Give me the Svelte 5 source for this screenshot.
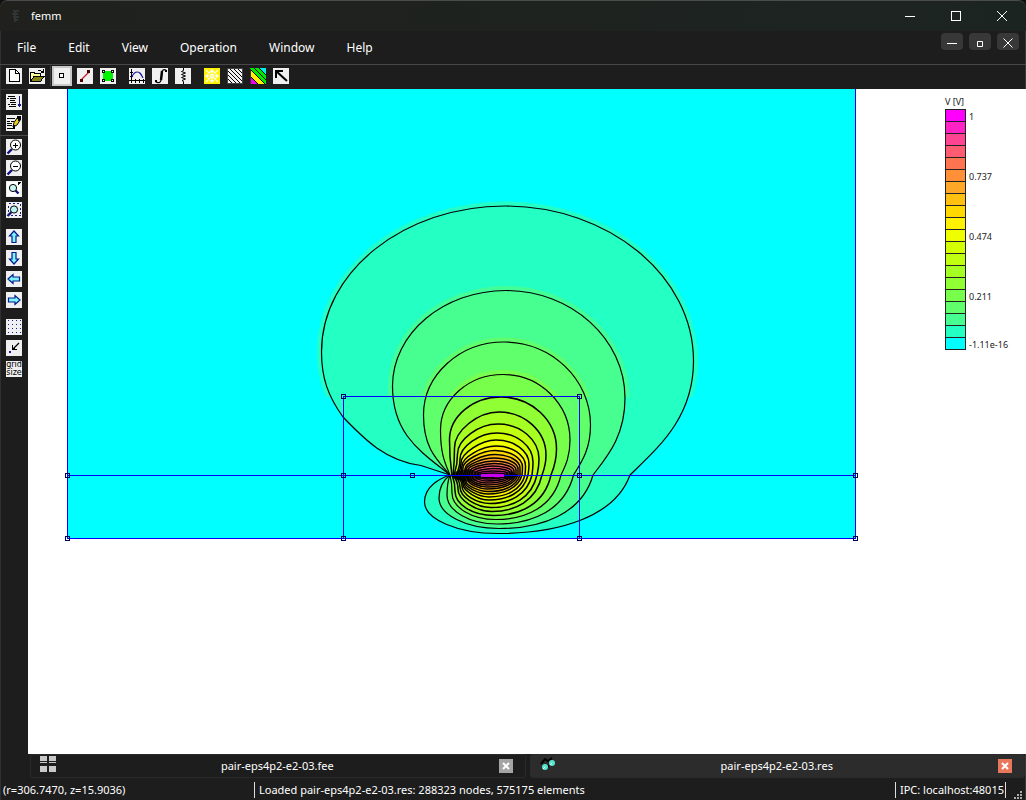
<script>
  const K = '#000';
  const doc = '<rect width="16" height="16" fill="#f0f0f0"/>';
  const p = (d, stroke = K, w = 1, fill = 'none') =>
    `<path d="${d}" stroke="${stroke}" stroke-width="${w}" fill="${fill}"/>`;
  const r = (x, y, w, h, fill = K) => `<rect x="${x}" y="${y}" width="${w}" height="${h}" fill="${fill}"/>`;
  const smooth = (s) => `<g shape-rendering="auto">${s}</g>`;

  const arrow = (angle) =>
    doc + `<g transform="rotate(${angle} 8 8)" shape-rendering="auto">` +
    p('M8 2L12.5 7H10V13.5H6V7H3.5Z', '#001a8c', 1.2, '#7df4ff') + '</g>';
  const lens = (cx, cy, rad, fill, handle) =>
    smooth(p(handle, '#10107c', 2.4) + `<circle cx="${cx}" cy="${cy}" r="${rad}" fill="${fill}" stroke="#000"/>`);
  const handles = [[2, 2], [11, 2], [2, 11], [11, 11]]
    .map(([x, y]) => r(x, y, 3, 3) + r(x + 1, y + 1, 1, 1, '#fff')).join('');
  const gridDots = [2, 6, 10, 14]
    .flatMap((y) => [2, 6, 10, 14].map((x) => r(x, y - 1, 1, 1, '#1a1a9c'))).join('');

  const icons = {
    new: doc + p('M3.5 1.5H9.5L13.5 5.5V13.5H3.5Z', K, 1, '#fff') + p('M9.5 1.5V5.5H13.5'),
    open: doc + p('M1.5 13.5V4.5H5L6 5.5H11.5V8', K, 1, '#ffff9a') +
      p('M1.5 13.5L5 8.5H15L11.5 13.5Z', K, 1, '#85851a') + p('M9 2.5H10M10.5 2L13.5 4M14.5 1V4.5H11.5'),
    point: doc + p('M5.5 5.5H9.5V9.5H5.5Z', K, 1, '#fff'),
    segment: doc + smooth(p('M4 12L12 4', '#c02030', 1.2)) + r(3, 11, 3, 3, '#4d0000') + r(10, 2, 3, 3, '#4d0000'),
    area: doc + p('M5 3H11L13 5V11L11 13H5L3 11V5Z', 'none', 0, '#00f400') + handles,
    plot: doc + p('M2.5 1V15M0 12.5H16M6.5 11V15M10.5 11V15M14.5 11V15M1 4.5H4M1 8.5H4') +
      smooth(p('M3 9C4 6 6 4 8.5 4S12 6 14 10', '#1818a8', 1.2)),
    integral: doc + smooth(p('M14 2.2C11.5 1 10 2 10 5L9 12C8.7 15 6 15.5 3.5 13.5', K, 1.3) + p('M10 3L9 12', K, 2.4)) + r(13, 2, 2, 2) + r(3, 12, 2, 2),
    coil: doc + smooth(p('M8.5 0V2.5L6.5 3.5L10.5 5L6.5 6.5L10.5 8L6.5 9.5L10.5 11L7 12.5L8.5 13.5V16', K, 1)),
    mesh: r(0, 0, 16, 16, '#fff400') + smooth(p('M8 1V15M1 8H15M2 2L7 7M14 2L9 7M2 14L7 9M14 14L9 9M8 2L14 8L8 14L2 8Z', '#fffde8', 1.2)),
    contour: doc + smooth(p('M1 11L5 15M1 7L9 15M1 3L13 15M2 0L15 13M6 0L15 9M10 0L15 5', K, 1)) + p('M.5 .5H15.5V15.5H.5Z', '#444'),
    density: r(0, 0, 16, 16, '#00e800') +
      smooth(p('M0 8L8 16H0Z', 'none', 0, '#f000f0') + p('M0 1L15 16H8L0 8Z', 'none', 0, '#fff200') + p('M9 0H16V7Z', 'none', 0, '#00f0f0') + p('M0 1L15 16M0 8L8 16M4 0L16 12M9 0L16 7', K, 1)) + p('M.5 .5V15.5', '#333'),
    vector: doc + r(2, 2, 8, 2) + r(2, 2, 2, 8) + smooth(p('M3 3L14 13', K, 2)),
    output: doc + r(2, 2, 7, 1) + r(1, 4, 2, 1) + r(4, 4, 6, 1) + r(4, 6, 5, 1) + r(4, 8, 6, 1) + r(2, 10, 2, 1) + r(5, 10, 5, 1) + r(3, 12, 7, 1) +
      r(13, 2, 1, 11, '#1a1a8c') + r(12, 11, 3, 1, '#1a1a8c') + r(12, 10, 3, 1, '#1a1a8c'),
    edit: doc + r(1, 3, 8, 1) + r(1, 6, 3, 1) + r(5, 6, 3, 1) + r(1, 8, 5, 1) + r(1, 10, 5, 1) + r(1, 13, 8, 1) +
      smooth(p('M7 12L8 7.5L11.5 2.5L14.5 4.5L11 10Z', K, 1, '#e8cf20')) + p('M11 2L14 1L15 4L13 6Z', K, 1, K) + r(7, 10, 2, 3),
    zoomIn: doc + lens(9.5, 6, 5, '#fff', 'M6 10L1.5 14.5') + p('M7 6.5H12M9.5 4V9'),
    zoomOut: doc + lens(9.5, 6, 5, '#fff', 'M6 10L1.5 14.5') + p('M7 6.5H12'),
    zoomPage: doc + r(1, 1, 13, 14, '#fff') + p('M12.5 4V1.5H15') + p('M12 4L15 1') + lens(7, 7, 3.6, '#c8f5f2', 'M9.5 9.5L12.5 12.5'),
    zoomWindow: doc + `<path d="M2.5 1.5H14.5V13.5H2.5Z" fill="none" stroke="#1a1a8c" stroke-dasharray="2 2"/>` + lens(8, 7.5, 3.6, '#b8f5f0', 'M5.5 10L1.5 14'),
    up: arrow(0), down: arrow(180), left: arrow(270), right: arrow(90),
    grid: doc + gridDots,
    snap: doc + smooth(p('M13 3L7 9', K, 1.3)) + p('M6.5 5V9.5H11') + r(7, 8, 2, 1) + r(3, 11, 2, 2, '#1a1a9c'),
    gridSize: doc +
      '<text x="8" y="6" text-anchor="middle" class="tiny">grid</text><text x="8" y="14" text-anchor="middle" class="tiny">size</text>'
  };

  const menus = ['File', 'Edit', 'View', 'Operation', 'Window', 'Help'];
  const toolGroups = [['new', 'open'], ['point', 'segment', 'area'], ['plot', 'integral', 'coil'], ['mesh', 'contour', 'density', 'vector']];
  const sideGroups = [['output', 'edit'], ['zoomIn', 'zoomOut', 'zoomPage', 'zoomWindow'], ['up', 'down', 'left', 'right'], ['grid', 'snap', 'gridSize']];

  // Colour scale, from the highest potential to the lowest.
  const scale = [
    '#ff00ff', '#ff22c4', '#ff4494', '#ff5c74', '#ff7450', '#ff9038', '#ffa828', '#ffc012', '#ffd800', '#fff200',
    '#f0ff00', '#d4ff00', '#c0ff10', '#a6ff22', '#90ff34', '#78ff4c', '#60ff6c', '#46ff90', '#24ffc4', '#00ffff'
  ];
  const scaleText = { 0: '1', 5: '0.737', 10: '0.474', 15: '0.211', 19: '-1.11e-16' };

  const axis = 475;
  // Equipotentials: anchor x, left x/y, top x/y, right x/y, axis crossing x, bottom y, lower-left x/y.
  const levels = [
    [450, 321.5, 352, 505, 206, 693.5, 361, 630, 533.5, 424.5, 502],
    [450, 392.5, 386, 506, 290.5, 625, 398, 593, 528.5, 439, 498],
    [450, 423.5, 415, 504, 342, 590.5, 425, 573.5, 524, 447, 495],
    [450, 440.5, 430, 503, 374.5, 570, 440, 561, 519.5, 452, 493],
    [452, 449.5, 440, 501, 397, 556.5, 449, 551, 515.5, 455, 491],
    [453, 454.5, 448, 499, 412, 546, 455, 542, 511.5, 458, 489],
    [454, 457.5, 454, 498, 424, 539, 459, 537, 507.5, 460, 487],
    [456, 460, 459, 497, 433, 533, 462, 532, 503.5, 462, 486],
    [457, 461, 463, 496, 440, 529, 464, 528, 500, 463, 484],
    [459, 462, 466, 496, 446, 525.5, 466, 525, 497, 464, 483],
    [461, 463, 468, 495, 450.5, 522.5, 467, 522, 494, 465, 482],
    [463, 465, 469, 495, 454.5, 520, 468, 520, 491.5, 466, 481],
    [465, 466, 470, 494, 458, 518, 469, 518, 489, 468, 480],
    [467, 468, 470, 494, 461, 516, 470, 516, 487, 469, 479],
    [469, 470, 471, 494, 463.5, 514, 471, 514, 485, 471, 479],
    [472, 472, 472, 493, 466, 512, 472, 512, 483, 473, 478],
    [475, 475, 473, 493, 468.5, 510, 473, 510, 481, 476, 477],
    [478, 478, 473, 493, 471, 507, 473, 507, 479, 479, 477],
    [480, 481, 474, 493, 473, 504, 474, 504, 477.5, 481, 476]
  ];

  function outline([a, lx, ly, tx, ty, rx, ry, cx, by, bx, bly], i) {
    const k = 0.55;
    const kl = i < 5 ? 0.55 : i < 8 ? 0.48 : 0.42;
    const bm = tx - 7;
    const first = i === 0
      ? `L421 465.5C386 461 365 440 343 417C328 396 ${lx} 378 ${lx} ${ly}`
      : `C${a - 0.5 * (a - lx)} ${axis - 0.26 * (axis - ly)} ${lx} ${ly + 0.55 * (axis - ly)} ${lx} ${ly}`;
    return `M${a} ${axis}` + first +
      `C${lx} ${ly - kl * (ly - ty)} ${tx - kl * (tx - lx)} ${ty} ${tx} ${ty}` +
      `C${tx + k * (rx - tx)} ${ty} ${rx} ${ry - k * (ry - ty)} ${rx} ${ry}` +
      `C${rx} ${ry + 0.5 * (axis - ry)} ${cx + 0.44 * (rx - cx)} ${axis - 0.24 * (axis - ry)} ${cx} ${axis}` +
      `C${cx - 0.115 * (cx - bm)} ${axis + 0.72 * (by - axis)} ${bm + 0.46 * (cx - bm)} ${by} ${bm} ${by}` +
      `C${bm - kl * (bm - bx)} ${by} ${bx} ${bly + kl * (by - bly)} ${bx} ${bly}` +
      `C${bx} ${bly - 0.6 * (bly - axis)} ${a - 0.35 * (a - bx)} ${axis + 3} ${a} ${axis}Z`;
  }
  const curves = levels.map((l, i) => ({ d: outline(l, i), fill: scale[18 - i], halo: scale[Math.max(17 - i, 0)], i }));
  const nodes = [[343, 396], [579, 396], [67, 475], [343, 475], [412, 475], [579, 475], [855, 475], [67, 538], [343, 538], [579, 538], [855, 538]];
  // Geometry segments, one unit thick: x, y, width, height.
  const edges = [[67, 88, 1, 451], [855, 88, 1, 451], [67, 538, 789, 1], [67, 475, 789, 1], [343, 396, 237, 1], [343, 396, 1, 143], [579, 396, 1, 143]];
</script>

{#snippet tool(name)}
  <button class="tool" class:active={name === 'point'} aria-label={name}>
    <svg class="icon" viewBox="0 0 16 16" shape-rendering="crispEdges">{@html icons[name]}</svg>
  </button>
{/snippet}

<div class="window">
  <header class="title">
    <svg class="logo" viewBox="0 0 16 16"><path d="M5 3h6M4 6h6M5 9h6M6 12h4M7 2v12" stroke="#303432" stroke-width="2" fill="none" /></svg>
    <span>femm</span>
    <div class="system">
      <button aria-label="Minimize"><svg viewBox="0 0 12 12"><path d="M1 6.5h10" /></svg></button>
      <button aria-label="Maximize"><svg viewBox="0 0 12 12"><rect x="1.5" y="1.5" width="9" height="9" /></svg></button>
      <button aria-label="Close"><svg viewBox="0 0 12 12"><path d="M1 1l10 10M11 1L1 11" /></svg></button>
    </div>
  </header>

  <nav class="menu">
    {#each menus as m}<button>{m}</button>{/each}
    <div class="child">
      <button aria-label="Minimize document"><svg viewBox="0 0 12 12"><path d="M1 7.5h10" /></svg></button>
      <button aria-label="Restore document"><svg viewBox="0 0 12 12"><path d="M3.5 5.5h5v5h-5z" /></svg></button>
      <button aria-label="Close document"><svg viewBox="0 0 12 12"><path d="M1.5 2.5l9 9M10.5 2.5l-9 9" /></svg></button>
    </div>
  </nav>

  <div class="toolbar">
    {#each toolGroups as g}
      <div class="group">{#each g as n}{@render tool(n)}{/each}</div>
    {/each}
  </div>

  <main>
    <aside>
      {#each sideGroups as g}
        <div class="group">{#each g as n}{@render tool(n)}{/each}</div>
      {/each}
    </aside>

    <section class="canvas">
      <svg class="field" viewBox="28 89 998 665" preserveAspectRatio="xMinYMin meet">
        <defs>
          <clipPath id="coarse"><rect x="67" y="89" width="788" height="308" /></clipPath>
        </defs>
        <rect x="67" y="88" width="788" height="450" fill="#00ffff" />
        {#each curves as c}
          {#if c.i < 4}
            <path d={c.d} fill="none" stroke={c.halo} stroke-width="9" opacity="0.5" clip-path="url(#coarse)" />
          {/if}
          <path d={c.d} fill={c.fill} stroke="#000" stroke-width={c.i < 4 ? 1.2 : 1.5} />
        {/each}
        <path d="M450 475.5L457 471L470 469L482 473V478L470 482L457 480ZM503 473L511 471L519 475.5L511 480L503 478Z" fill="#000" opacity="0.75" />
        {#each edges as [x, y, w, h]}
          <rect {x} {y} width={w} height={h} fill="#0000ff" />
        {/each}
        <path d="M481 475.5H504" stroke="#c800f0" stroke-width="3" />
        {#each nodes as [x, y]}
          <rect x={x - 1.5} y={y - 1.5} width="4" height="4" fill="none" stroke="#000058" />
        {/each}
      </svg>

      <div class="legend">
        <div class="unit">V [V]</div>
        {#each scale as c, i}
          <div class="step"><i style:background={c}></i><span>{scaleText[i] ?? ''}</span></div>
        {/each}
      </div>
    </section>
  </main>

  <div class="tabs">
    <div class="tab">
      <svg class="icon" viewBox="0 0 16 16" shape-rendering="crispEdges"><path d="M0 0h7v5H0zM9 0h7v5H9zM0 6h7v1H0zM9 6h7v1H9zM0 10h7v6H0zM9 10h7v6H9z" fill="#c8c8c8" /></svg>
      <button class="name">pair-eps4p2-e2-03.fee</button>
      <button class="close" aria-label="Close tab"><svg viewBox="0 0 14 14"><path d="M4 4l6 6M10 4l-6 6" /></svg></button>
    </div>
    <div class="tab current">
      <svg class="icon" viewBox="0 0 16 16"><path d="M1 8L5 3L8 5L12 2M6 13L9 9" stroke="#000" stroke-width="2" fill="none" /><circle cx="5" cy="11" r="3" fill="#58e6cf" /><circle cx="12" cy="7" r="3" fill="#58e6cf" /><path d="M3 13l2-2M10 9l2-2" stroke="#dffff8" /></svg>
      <button class="name">pair-eps4p2-e2-03.res</button>
      <button class="close" aria-label="Close tab"><svg viewBox="0 0 14 14"><path d="M4 4l6 6M10 4l-6 6" /></svg></button>
    </div>
  </div>

  <footer>
    <span class="coords">(r=306.7470, z=15.9036)</span>
    <span class="message">Loaded pair-eps4p2-e2-03.res: 288323 nodes, 575175 elements</span>
    <span class="ipc">IPC: localhost:48015</span>
    <svg class="grip" viewBox="0 0 10 10" shape-rendering="crispEdges"><path d="M7 1h2v2H7zM4 4h2v2H4zM7 4h2v2H7zM1 7h2v2H1zM4 7h2v2H4zM7 7h2v2H7z" fill="#aaa" /></svg>
  </footer>
</div>

<style>
  :global(body) { margin: 0; background: #101010; }
  .window {
    box-sizing: border-box;
    display: flex;
    flex-direction: column;
    min-height: 100vh;
    background: #1d1d1d;
    border-top: 1px solid #4a4c4a;
    border-radius: 8px 8px 0 0;
    box-shadow: inset 1px 0 #303030, inset -1px 0 #383838;
    color: #fff;
    font: 11px/16px "Noto Sans", "Open Sans", sans-serif;
    overflow: hidden;
  }
  button {
    padding: 0;
    border: 0;
    background: none;
    color: inherit;
    font: inherit;
  }
  svg { display: block; }
  .icon { width: 16px; height: 16px; flex: none; }
  .icon :global(.tiny) { font: 8px "DejaVu Sans", sans-serif; fill: #000; }

  .title {
    display: flex;
    align-items: center;
    height: 30px;
    padding: 0 1px 0 8px;
    background: linear-gradient(90deg, #20211d, #1c2422);
  }
  .logo { width: 16px; height: 16px; margin-right: 7px; }
  .system { display: flex; margin-left: auto; }
  .system button { display: grid; place-items: center; width: 46px; height: 30px; }
  .system svg, .child svg { width: 12px; height: 12px; fill: none; stroke: #fff; }

  .menu {
    display: flex;
    align-items: center;
    gap: 32px;
    height: 33px;
    padding: 0 7px 0 17px;
    border-bottom: 1px solid #484848;
    font-size: 12px;
  }
  .child { display: flex; align-self: flex-start; gap: 6px; margin: 2px 0 0 auto; }
  .child button { display: grid; place-items: center; width: 22px; height: 17px; border-radius: 4px; background: #383838; }

  .toolbar { display: flex; height: 20px; padding: 1px 3px 3px; }
  .toolbar .group { display: flex; align-items: center; }
  .toolbar .group + .group { margin-left: 6px; }
  .toolbar .group:nth-child(2) { margin-left: 1px; border-left: 1px solid #404040; }
  .toolbar .tool { padding: 0 4px 0 3px; }
  .active .icon { outline: 2px solid #c9c9c9; background: #f0f0f0; }

  main { display: flex; flex: 1; }
  aside { width: 28px; flex: none; padding-top: 2px; box-sizing: border-box; border-top: 1px solid #333; }
  aside .group { display: flex; flex-direction: column; margin-bottom: 6px; }
  aside .group:first-child { margin-bottom: 0; padding-bottom: 1px; border-bottom: 1px solid #4a4a4a; }
  aside .group:nth-child(2) { padding-top: 1px; }
  aside .tool { height: 21px; padding: 2px 6px 3px; }

  .canvas { position: relative; flex: 1; background: #fff; }
  .field { width: 100%; }
  .legend {
    position: absolute;
    top: 7px;
    right: 0;
    width: 81px;
    color: #222;
    font-size: 9px;
    line-height: 12px;
  }
  .unit { height: 13px; }
  .step { display: flex; height: 12px; }
  .step i { box-sizing: border-box; width: 21px; height: 13px; border: 1px solid #222; }
  .step span { padding: 2px 0 0 3px; white-space: nowrap; }

  .tabs { display: flex; gap: 4px; height: 26px; padding: 0 1px 2px 30px; box-sizing: border-box; }
  .tab {
    display: flex;
    align-items: center;
    flex: 1;
    box-sizing: border-box;
    padding: 0 12px 0 9px;
    border: 1px solid #2a2a2a;
    border-radius: 3px;
  }
  .tab .icon { align-self: flex-start; margin-top: 1px; }
  .tab.current { background: #2c2c2c; }
  .name { flex: 1; text-align: center; }
  .close { width: 14px; height: 14px; background: #a4a4a4; }
  .close svg { fill: none; stroke: #fff; stroke-width: 2; }
  .current .close { background: #e9775c; }

  footer { display: flex; align-items: center; height: 20px; padding: 0 3px; }
  footer span { box-sizing: border-box; line-height: 16px; white-space: nowrap; }
  .coords { width: 251px; }
  .message { flex: 1; padding-left: 4px; border-left: 1px solid #ddd; }
  .ipc { padding: 0 1px 0 4px; border: solid #ddd; border-width: 0 1px; }
  .grip { width: 10px; height: 10px; margin-left: 7px; align-self: flex-end; }
</style>
